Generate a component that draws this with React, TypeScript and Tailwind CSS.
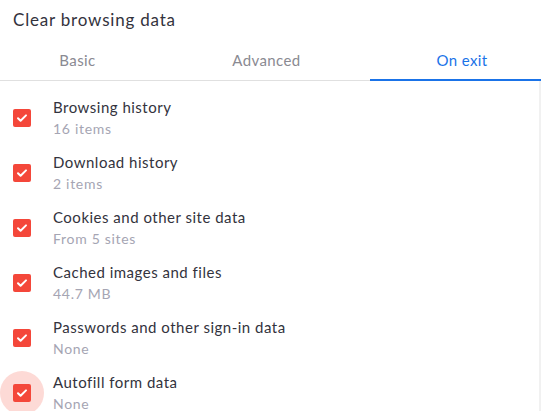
import React from 'react'

const items = [
  { label: 'Browsing history', sub: '16 items' },
  { label: 'Download history', sub: '2 items' },
  { label: 'Cookies and other site data', sub: 'From 5 sites' },
  { label: 'Cached images and files', sub: '44.7 MB' },
  { label: 'Passwords and other sign-in data', sub: 'None' },
  { label: 'Autofill form data', sub: 'None', focused: true },
]

function Check({ focused }: { focused?: boolean }) {
  return (
    <div className="relative flex h-[18px] w-[18px] shrink-0 items-center justify-center">
      {focused && (
        <div className="absolute left-1/2 top-1/2 h-[44px] w-[44px] -translate-x-1/2 -translate-y-1/2 rounded-full bg-[#fddad6]" />
      )}
      <div className="relative flex h-[18px] w-[18px] items-center justify-center rounded-[2px] bg-[#f4473a]">
        <svg width="12" height="12" viewBox="0 0 12 12" fill="none">
          <path d="M2 6.2l2.6 2.6L10 3.4" stroke="white" strokeWidth="2" strokeLinecap="round" strokeLinejoin="round" />
        </svg>
      </div>
    </div>
  )
}

export default function App() {
  return (
    <div className="h-[411px] w-[541px] overflow-hidden bg-white font-['Lato',sans-serif]">
      <div className="flex h-10 items-center pl-[13px] text-[17px] tracking-[0.8px] text-[#33333d]">Clear browsing data</div>

      {/* Tabs */}
      <div className="flex h-[41px] border-b border-[#e0e0e0] text-[15px] tracking-[0.4px]">
        <div className="flex w-[155px] items-center justify-center text-[#8a8a92]">Basic</div>
        <div className="flex w-[215px] items-center justify-center pl-[8px] text-[#8a8a92]">Advanced</div>
        <div className="-mb-px flex flex-1 items-center justify-center border-b-2 border-[#1a73e8] pl-[13px] pt-[2px] text-[#1a73e8]">
          On exit
        </div>
      </div>

      <div className="h-full border-r-2 border-[#f1f1f1] pt-[9px]">
        {items.map((it) => (
          <div key={it.label} className="flex h-[55px] items-center">
            <div className="flex w-[53px] shrink-0 pl-[13px]">
              <Check focused={it.focused} />
            </div>
            <div className="flex flex-col">
              <span className="text-[15px] leading-[22px] tracking-[0.5px] text-[#33333d]">{it.label}</span>
              <span className="text-[14px] leading-[22px] tracking-[0.7px] text-[#a5a5b3]">{it.sub}</span>
            </div>
          </div>
        ))}
      </div>
    </div>
  )
}
